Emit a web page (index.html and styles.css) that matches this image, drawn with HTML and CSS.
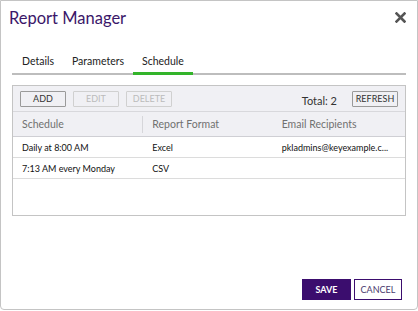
FILE: index.html
```html
<!DOCTYPE html>
<html lang="en">
<head>
    <meta charset="UTF-8">
    <title>Report Manager</title>
    <link rel="stylesheet" href="styles.css">
</head>
<body>
    <div class="dialog">
        <div class="title-bar">
            <h1>Report Manager</h1>
            <button class="close" aria-label="Close">
                <svg width="11" height="11" viewBox="0 0 11 11">
                    <path d="M1.5 1.5 L9.5 9.5 M9.5 1.5 L1.5 9.5" stroke="#555" stroke-width="2.6" stroke-linecap="square"/>
                </svg>
            </button>
        </div>

        <div class="tabs">
            <div class="tab">Details</div>
            <div class="tab">Parameters</div>
            <div class="tab active">Schedule</div>
        </div>

        <div class="grid">
            <div class="toolbar">
                <button class="btn">ADD</button>
                <button class="btn" disabled>EDIT</button>
                <button class="btn" disabled>DELETE</button>
                <span class="total">Total: 2</span>
                <button class="btn">REFRESH</button>
            </div>
            <div class="row head">
                <div class="cell c1">Schedule</div>
                <div class="cell c2">Report Format</div>
                <div class="cell c3">Email Recipients</div>
            </div>
            <div class="row">
                <div class="cell c1">Daily at 8:00 AM</div>
                <div class="cell c2">Excel</div>
                <div class="cell c3">pkladmins@keyexample.c...</div>
            </div>
            <div class="row">
                <div class="cell c1">7:13 AM every Monday</div>
                <div class="cell c2">CSV</div>
                <div class="cell c3"></div>
            </div>
        </div>

        <div class="footer">
            <button class="save">SAVE</button>
            <button class="cancel">CANCEL</button>
        </div>
    </div>
</body>
</html>
```

FILE: styles.css
```css
body {
    margin: 0;
    font-family: 'Lato', 'Liberation Sans', sans-serif;
    background: #fff;
}
.dialog {
    width: 418px;
    height: 310px;
    box-sizing: border-box;
    border: 1px solid #c4c4c4;
    border-radius: 0 0 4px 4px;
    display: flex;
    flex-direction: column;
}
.title-bar {
    display: flex;
    align-items: center;
    justify-content: space-between;
    height: 33px;
    padding: 0 11px 0 8px;
}
h1 {
    margin: 0;
    font-size: 16.5px;
    font-weight: 400;
    color: #3b1769;
}
.close {
    border: none;
    background: none;
    padding: 0;
    display: flex;
    cursor: pointer;
}
.tabs {
    display: flex;
    margin: 16px 11px 0;
    padding-left: 1px;
    border-bottom: 2px solid #bdbdbd;
}
.tab {
    padding: 4px 9px 4px;
    font-size: 10.5px;
    line-height: 14px;
    color: #222;
    border-bottom: 3px solid transparent;
    margin-bottom: -2px;
    cursor: pointer;
}
.tab.active {
    border-bottom-color: #33b42a;
}
.grid {
    margin: 10px 11px 0;
    height: 131px;
    box-sizing: border-box;
    border: 1px solid #c4c4c4;
}
.toolbar {
    display: flex;
    align-items: center;
    gap: 7px;
    height: 25px;
    padding: 0 7px;
    background: #f0f0f4;
    border-bottom: 1px solid #d8d8dc;
}
.btn {
    width: 46px;
    height: 16px;
    padding: 0;
    font-family: inherit;
    font-size: 9px;
    color: #333;
    background: #fff0;
    border: 1px solid #9a9a9a;
    border-radius: 1px;
}
.btn:disabled {
    color: #bbb;
    border-color: #d0d0d0;
}
.total {
    margin-left: auto;
    margin-right: 8px;
    font-size: 11px;
    color: #333;
    padding-top: 3px;
}
.row {
    display: flex;
    height: 20px;
    align-items: center;
    border-bottom: 1px solid #dcdcdc;
    font-size: 9px;
    color: #111;
}
.row.head {
    height: 24px;
    background: #f0f0f4;
    border-bottom-color: #cfcfd4;
    font-size: 10.5px;
    color: #707070;
}
.cell {
    padding: 0 10px 0 9px;
    box-sizing: border-box;
    white-space: nowrap;
}
.c1 { width: 131px; }
.c2 { width: 130px; }
.c3 { width: 133px; }
.head .c1 {
    border-right: 1px solid #d6d6da;
    line-height: 17px;
}
.footer {
    margin-top: auto;
    display: flex;
    justify-content: flex-end;
    gap: 3px;
    padding: 0 15px 9px 0;
}
.save, .cancel {
    width: 49px;
    height: 21px;
    font-family: inherit;
    font-size: 9px;
    font-weight: 700;
    padding: 0;
    border: 1px solid #3b0d6e;
}
.save {
    background: #3b0d6e;
    color: #fff;
}
.cancel {
    width: 48px;
    background: #fff;
    color: #4a3a6e;
    font-weight: 400;
}
```
